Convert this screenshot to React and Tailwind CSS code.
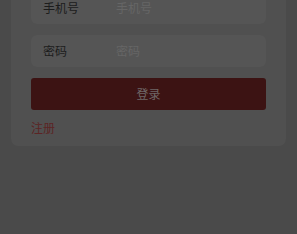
export default function App() {
  const font = { fontFamily: '"Noto Sans CJK SC", "Noto Sans", sans-serif' }
  return (
    <div className="w-[297px] h-[234px] overflow-hidden bg-[#4a4a4a]" style={font}>
      <div className="mx-[11px] -mt-[20px] w-[275px] rounded-b-[7px] bg-[#505050] px-[20px] pt-[12px] pb-[10px]">
        {/* phone */}
        <div className="flex h-[32px] items-center rounded-[6px] bg-[#555555] px-[12px] text-[12px]">
          <span className="w-[73px] text-[#1c1c1c]">手机号</span>
          <span className="text-[#666666]">手机号</span>
        </div>
        {/* password */}
        <div className="mt-[11px] flex h-[32px] items-center rounded-[6px] bg-[#555555] px-[12px] text-[12px]">
          <span className="w-[73px] text-[#1c1c1c]">密码</span>
          <span className="text-[#666666]">密码</span>
        </div>
        {/* login */}
        <div className="mt-[11px] flex h-[32px] items-center justify-center rounded-[3px] bg-[#3c1313] text-[12px] text-[#6f6767]">
          登录
        </div>
        <div className="mt-[10px] text-[12px] leading-[16px] text-[#5c2424]">注册</div>
      </div>
    </div>
  )
}
